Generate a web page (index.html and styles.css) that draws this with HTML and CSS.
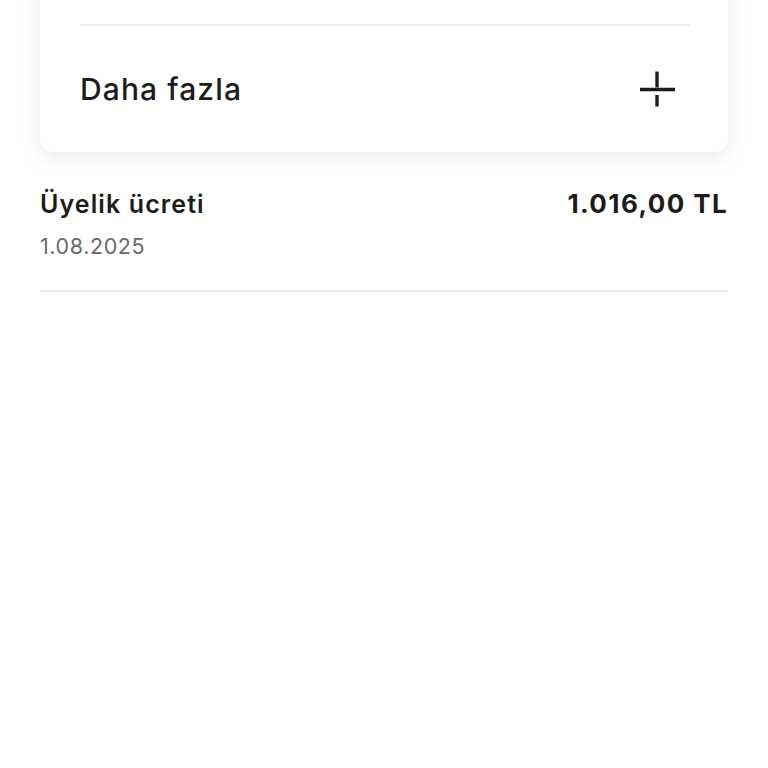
FILE: index.html
```html
<!DOCTYPE html>
<html>
<head>
  <title>Üyelik</title>
  <link rel="stylesheet" href="styles.css">
</head>
<body>
  <div class="page">
    <div class="card">
      <div class="card-row card-row-top"></div>
      <div class="card-row card-row-more">
        <span class="row-label">Daha fazla</span>
        <span class="plus-icon">
          <svg width="40" height="40" viewBox="0 0 40 40">
            <path d="M18 1.5 V17.5" stroke="#1c1c1c" stroke-width="3.4"/>
            <path d="M1 19.5 H36" stroke="#1c1c1c" stroke-width="3.6"/>
            <path d="M18 25 V36.5" stroke="#1c1c1c" stroke-width="3.4"/>
          </svg>
        </span>
      </div>
    </div>

    <div class="payment">
      <div class="payment-info">
        <div class="payment-title">Üyelik ücreti</div>
        <div class="payment-date">1.08.2025</div>
      </div>
      <div class="payment-amount">1.016,00 TL</div>
    </div>
  </div>
</body>
</html>
```

FILE: styles.css
```css
:root {
  --text-color: #1c1c1c;
  --muted-color: #6a6a6e;
  --border-color: #ececec;
  --bg-color: #ffffff;
}

body {
  margin: 0;
  font-family: Inter, "Noto Sans", sans-serif;
  color: var(--text-color);
  background: var(--bg-color);
}

.page {
  padding: 0 40px;
}

.card {
  margin-top: -60px;
  padding: 0 38px 0 40px;
  background: var(--bg-color);
  border-radius: 14px;
  box-shadow: 0 6px 22px rgba(0, 0, 0, 0.08);
}

.card-row {
  display: flex;
  align-items: center;
  justify-content: space-between;
}

.card-row-top {
  height: 84px;
  border-bottom: 2px solid var(--border-color);
}

.card-row-more {
  height: 126px;
}

.row-label {
  font-size: 30px;
  font-weight: 500;
  letter-spacing: 1.1px;
}

.plus-icon {
  display: flex;
  margin-right: 11px;
  margin-top: 2px;
}

.payment {
  display: flex;
  justify-content: space-between;
  align-items: flex-start;
  padding: 37px 0 31px;
  border-bottom: 2px solid var(--border-color);
}

.payment-title {
  font-size: 25px;
  line-height: 30px;
  font-weight: 600;
  letter-spacing: 1.1px;
}

.payment-date {
  margin-top: 14px;
  font-size: 21.5px;
  line-height: 26px;
  color: var(--muted-color);
  letter-spacing: 0.6px;
}

.payment-amount {
  font-size: 26px;
  line-height: 30px;
  font-weight: 700;
  letter-spacing: 1.4px;
}
```
